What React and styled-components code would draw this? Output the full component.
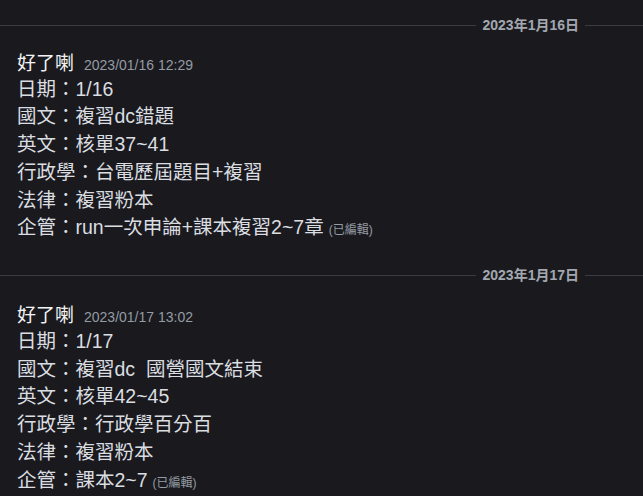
import styled, { createGlobalStyle } from 'styled-components'

const GlobalStyle = createGlobalStyle`
  html, body {
    margin: 0;
    padding: 0;
    background: #1a1a1e;
  }
  body {
    font-family: "Noto Sans", "Noto Sans CJK TC", sans-serif;
    color: #dbdee1;
    overflow: hidden;
  }
`

const Chat = styled.div`
  width: 643px;
  height: 496px;
  background: #1a1a1e;
  display: flex;
  flex-direction: column;
  overflow: hidden;
`

const DividerRow = styled.div`
  display: flex;
  align-items: center;
  gap: 6px;
  margin-top: ${({ $top }) => $top}px;
  height: 0;
`

const DividerLine = styled.div`
  height: 1px;
  background: #3a3a41;
  flex: ${({ $grow }) => ($grow ? 1 : '0 0 58px')};
`

const DividerText = styled.span`
  font-family: "Liberation Sans", "Noto Sans CJK TC", sans-serif;
  font-size: 14px;
  font-weight: 600;
  color: #a3a8b0;
  line-height: 16px;
  white-space: nowrap;
`

const Message = styled.div`
  padding: 0 17px;
  margin-top: ${({ $top }) => $top}px;
`

const Header = styled.div`
  display: flex;
  align-items: baseline;
  gap: 10px;
  height: 27.5px;
  line-height: 27.5px;
`

const Name = styled.span`
  font-family: "Noto Sans CJK TC", sans-serif;
  font-size: 19px;
  font-weight: 400;
  color: #f2f3f5;
`

const Timestamp = styled.span`
  font-family: "Liberation Sans", sans-serif;
  font-size: 14px;
  color: #949ba4;
`

const Line = styled.div`
  font-family: "Liberation Sans", "Noto Sans CJK TC", sans-serif;
  font-size: 19.5px;
  height: 27.8px;
  line-height: 27.8px;
  white-space: pre;
  color: #dbdee1;
`

const Edited = styled.span`
  font-family: "Liberation Sans", "Noto Sans CJK TC", sans-serif;
  font-size: 12px;
  color: #949ba4;
  margin-left: 5px;
`

const DateDivider = ({ label, top }) => (
  <DividerRow $top={top}>
    <DividerLine $grow />
    <DividerText>{label}</DividerText>
    <DividerLine />
  </DividerRow>
)

const days = [
  {
    label: '2023年1月16日',
    time: '2023/01/16 12:29',
    lines: ['日期：1/16', '國文：複習dc錯題', '英文：核單37~41', '行政學：台電歷屆題目+複習', '法律：複習粉本', '企管：run一次申論+課本複習2~7章'],
  },
  {
    label: '2023年1月17日',
    time: '2023/01/17 13:02',
    lines: ['日期：1/17', '國文：複習dc  國營國文結束', '英文：核單42~45', '行政學：行政學百分百', '法律：複習粉本', '企管：課本2~7'],
  },
]

export default function App() {
  return (
    <Chat>
      <GlobalStyle />
      {days.map((day, i) => (
        <div key={day.label}>
          <DateDivider label={day.label} top={i === 0 ? 25 : 33} />
          <Message $top={i === 0 ? 23 : 25}>
            <Header>
              <Name>好了喇</Name>
              <Timestamp>{day.time}</Timestamp>
            </Header>
            {day.lines.map((text, j) => (
              <Line key={j}>
                {text}
                {j === day.lines.length - 1 && <Edited>(已編輯)</Edited>}
              </Line>
            ))}
          </Message>
        </div>
      ))}
    </Chat>
  )
}
